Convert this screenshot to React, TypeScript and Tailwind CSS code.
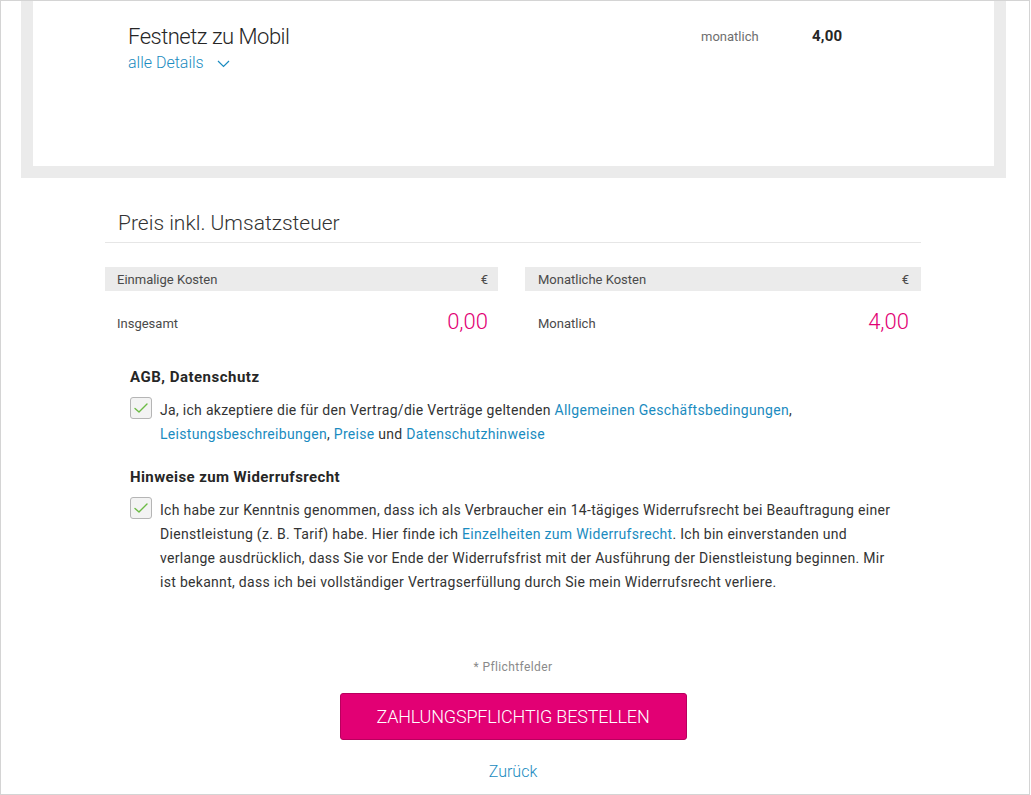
import React from "react";

function Check() {
  return (
    <div className="w-[22px] h-[22px] shrink-0 rounded-[3px] border border-[#b5b5b5] bg-[#f3f3f3] flex items-center justify-center">
      <svg width="16" height="14" viewBox="0 0 16 14" fill="none">
        <path d="M2 7.5 L6 11 L14 3" stroke="#6cbb45" strokeWidth="1.4" strokeLinecap="round" strokeLinejoin="round" />
      </svg>
    </div>
  );
}

export default function App() {
  const link = "text-[#1a8bc0]";
  return (
    <div className="w-[1030px] h-[795px] border border-[#d4d4d4] bg-white overflow-hidden font-['Roboto','Liberation_Sans',sans-serif] text-[#333]">
      {/* top product frame */}
      <div className="ml-[20px] w-[985px] bg-[#ebebeb] px-[12px] pb-[12px]">
        <div className="h-[165px] bg-white pl-[95px] pt-[22px] flex">
          <div className="w-[573px]">
            <div className="text-[22px] leading-[28px] font-light tracking-[-0.5px] text-[#262626]">Festnetz zu Mobil</div>
            <div className={`mt-[2px] flex items-center text-[16px] leading-[20px] font-light ${link}`}>
              <span>alle Details</span>
              <svg className="ml-[13px] mt-[2px]" width="13" height="8" viewBox="0 0 13 8" fill="none">
                <path d="M1 1 L6.5 6.5 L12 1" stroke="#1a8bc0" strokeWidth="1.2" />
              </svg>
            </div>
          </div>
          <div className="w-[111px] pt-[5px] text-[13px] leading-[18px] text-[#6e6e6e]">monatlich</div>
          <div className="pt-[3px] text-[15px] leading-[20px] font-bold tracking-[0.2px] text-[#262626]">4,00</div>
        </div>
      </div>

      {/* price section */}
      <div className="w-[816px] ml-[104px] mt-[32px]">
        <div className="pl-[13px] text-[21px] leading-[26px] font-light text-[#333]">Preis inkl. Umsatzsteuer</div>
        <div className="mt-[6px] h-px bg-[#e6e6e6]" />
        <div className="mt-[24px] grid grid-cols-[393px_396px] gap-[27px]">
          <div>
            <div className="h-[24px] bg-[#ebebeb] flex items-center justify-between pl-[12px] pr-[10px] text-[13px] text-[#4a4a4a]">
              <span className="mt-[1px]">Einmalige Kosten</span>
              <span className="mt-[1px]">€</span>
            </div>
            <div className="h-[60px] flex items-center justify-between pl-[12px] pr-[10px]">
              <span className="text-[13px] text-[#4a4a4a] mt-[5px]">Insgesamt</span>
              <span className="text-[22px] font-light text-[#e20074]">0,00</span>
            </div>
          </div>
          <div>
            <div className="h-[24px] bg-[#ebebeb] flex items-center justify-between pl-[13px] pr-[12px] text-[13px] text-[#4a4a4a]">
              <span className="mt-[1px]">Monatliche Kosten</span>
              <span className="mt-[1px]">€</span>
            </div>
            <div className="h-[60px] flex items-center justify-between pl-[13px] pr-[12px]">
              <span className="text-[13px] text-[#4a4a4a] mt-[5px]">Monatlich</span>
              <span className="text-[22px] font-light text-[#e20074]">4,00</span>
            </div>
          </div>
        </div>

        {/* AGB */}
        <div className="pl-[25px] mt-[15px]">
          <div className="text-[15px] leading-[22px] font-bold tracking-[0.5px] text-[#262626]">AGB, Datenschutz</div>
          <div className="mt-[9px] flex gap-[8px]">
            <Check />
            <div className="text-[14px] leading-[24px] tracking-[0.3px] text-[#333] mt-[1px] whitespace-nowrap">
              Ja, ich akzeptiere die für den Vertrag/die Verträge geltenden <span className={link}>Allgemeinen Geschäftsbedingungen</span>,
              <br />
              <span className={link}>Leistungsbeschreibungen</span>, <span className={link}>Preise</span> und <span className={link}>Datenschutzhinweise</span>
            </div>
          </div>

          <div className="mt-[20px] text-[15px] leading-[22px] font-bold tracking-[0.4px] text-[#262626]">Hinweise zum Widerrufsrecht</div>
          <div className="mt-[9px] flex gap-[8px]">
            <Check />
            <div className="text-[14px] leading-[24px] tracking-[0.3px] text-[#333] mt-[1px] whitespace-nowrap">
              Ich habe zur Kenntnis genommen, dass ich als Verbraucher ein 14-tägiges Widerrufsrecht bei Beauftragung einer
              <br />
              Dienstleistung (z. B. Tarif) habe. Hier finde ich <span className={link}>Einzelheiten zum Widerrufsrecht</span>. Ich bin einverstanden und
              <br />
              verlange ausdrücklich, dass Sie vor Ende der Widerrufsfrist mit der Ausführung der Dienstleistung beginnen. Mir
              <br />
              ist bekannt, dass ich bei vollständiger Vertragserfüllung durch Sie mein Widerrufsrecht verliere.
            </div>
          </div>
        </div>
      </div>

      {/* footer */}
      <div className="flex flex-col items-center ml-[-4px]">
        <div className="mt-[65px] text-[12px] leading-[16px] tracking-[0.4px] text-[#8a8a8a]">* Pflichtfelder</div>
        <button className="mt-[18px] w-[347px] h-[47px] rounded-[3px] bg-[#e20074] border border-[#b8005e] text-white text-[18px] font-light tracking-[-0.2px]">
          ZAHLUNGSPFLICHTIG BESTELLEN
        </button>
        <div className={`mt-[22px] text-[16px] leading-[20px] font-light ${link}`}>Zurück</div>
      </div>
    </div>
  );
}
